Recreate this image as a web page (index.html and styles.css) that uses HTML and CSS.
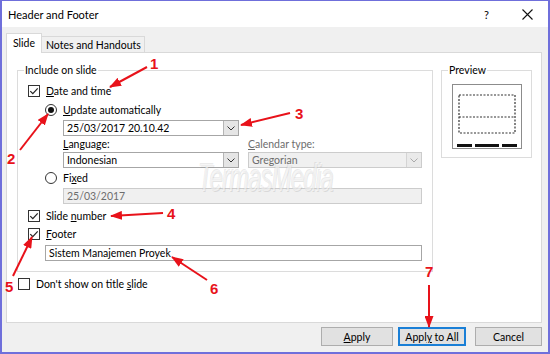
FILE: index.html
```html
<!DOCTYPE html>
<html>
<head>
    <title>Header and Footer</title>
    <link rel="stylesheet" href="styles.css">
</head>
<body>
<div class="dialog">
    <div class="titlebar">
        <span class="title">Header and Footer</span>
        <span class="help">?</span>
        <svg class="close" width="11" height="11" viewBox="0 0 11 11"><path d="M0.5 0.5L10.5 10.5M10.5 0.5L0.5 10.5" stroke="#111" stroke-width="1.1"/></svg>
    </div>

    <div class="content">
        <div class="tabs">
            <div class="tab active">Slide</div>
            <div class="tab">Notes and Handouts</div>
        </div>

        <div class="panel">
            <div class="panel-top">
                <fieldset class="group include">
                    <legend>Include on slide</legend>
                    <div class="rows">
                        <label class="check row-date">
                            <svg width="12" height="12" viewBox="0 0 12 12"><rect x="0.5" y="0.5" width="11" height="11" fill="#fff" stroke="#333"/><path d="M2.3 6.2L4.8 8.7L9.7 3.3" fill="none" stroke="#222" stroke-width="1.2"/></svg>
                            <span><u>D</u>ate and time</span>
                        </label>
                        <label class="check radio row-auto">
                            <svg width="12" height="12" viewBox="0 0 12 12"><circle cx="6" cy="6" r="5.5" fill="#fff" stroke="#333"/><circle cx="6" cy="6" r="3" fill="#111"/></svg>
                            <span><u>U</u>pdate automatically</span>
                        </label>
                        <div class="field select date-select">
                            <span class="value">25/03/2017 20.10.42</span>
                            <span class="drop"><svg width="8" height="5" viewBox="0 0 8 5"><path d="M0.5 0.5L4 4L7.5 0.5" fill="none" stroke="#333"/></svg></span>
                        </div>
                        <div class="field pair labels">
                            <span class="half"><u>L</u>anguage:</span>
                            <span class="half wide muted"><u>C</u>alendar type:</span>
                        </div>
                        <div class="field pair">
                            <div class="select half">
                                <span class="value">Indonesian</span>
                                <span class="drop"><svg width="8" height="5" viewBox="0 0 8 5"><path d="M0.5 0.5L4 4L7.5 0.5" fill="none" stroke="#333"/></svg></span>
                            </div>
                            <div class="select half wide disabled">
                                <span class="value">Gregorian</span>
                                <span class="drop"><svg width="8" height="5" viewBox="0 0 8 5"><path d="M0.5 0.5L4 4L7.5 0.5" fill="none" stroke="#aaa"/></svg></span>
                            </div>
                        </div>
                        <label class="check radio row-fixed">
                            <svg width="12" height="12" viewBox="0 0 12 12"><circle cx="6" cy="6" r="5.5" fill="#fff" stroke="#333"/></svg>
                            <span>Fi<u>x</u>ed</span>
                        </label>
                        <div class="field input fixed-input disabled">25/03/2017</div>
                        <label class="check row-number">
                            <svg width="12" height="12" viewBox="0 0 12 12"><rect x="0.5" y="0.5" width="11" height="11" fill="#fff" stroke="#333"/><path d="M2.3 6.2L4.8 8.7L9.7 3.3" fill="none" stroke="#222" stroke-width="1.2"/></svg>
                            <span>Slide <u>n</u>umber</span>
                        </label>
                        <label class="check row-footer">
                            <svg width="12" height="12" viewBox="0 0 12 12"><rect x="0.5" y="0.5" width="11" height="11" fill="#fff" stroke="#333"/><path d="M2.3 6.2L4.8 8.7L9.7 3.3" fill="none" stroke="#222" stroke-width="1.2"/></svg>
                            <span><u>F</u>ooter</span>
                        </label>
                        <div class="input footer-input">Sistem Manajemen Proyek</div>
                    </div>
                </fieldset>

                <fieldset class="group preview">
                    <legend>Preview</legend>
                    <svg class="preview-box" width="70" height="65" viewBox="0 0 70 65">
                        <rect x="0.5" y="0.5" width="69" height="64" fill="#fff" stroke="#8c8c8c"/>
                        <rect x="7" y="11" width="56" height="38" fill="none" stroke="#333" stroke-width="1.2" stroke-dasharray="2 1.5"/>
                        <line x1="7" y1="33" x2="63" y2="33" stroke="#333" stroke-width="1.2" stroke-dasharray="2 1.5"/>
                        <rect x="5" y="60" width="15" height="3" fill="#111"/>
                        <rect x="23" y="60" width="24" height="3" fill="#111"/>
                        <rect x="50" y="60" width="15" height="3" fill="#111"/>
                    </svg>
                </fieldset>
            </div>

            <label class="check dont-show">
                <svg width="12" height="12" viewBox="0 0 12 12"><rect x="0.5" y="0.5" width="11" height="11" fill="#fff" stroke="#333"/></svg>
                <span>Don't show on title <u>s</u>lide</span>
            </label>
        </div>

        <div class="buttons">
            <button class="btn apply"><u>A</u>pply</button>
            <button class="btn apply-all">Appl<u>y</u> to All</button>
            <button class="btn cancel">Cancel</button>
        </div>
    </div>

    <div class="watermark">TermasMedia</div>

    <!-- red callouts drawn over the dialog -->
    <svg class="callouts" width="550" height="354" viewBox="0 0 550 354">
        <defs>
            <marker id="head" markerWidth="12" markerHeight="9" refX="11" refY="4.5" orient="auto" markerUnits="userSpaceOnUse">
                <path d="M0 0L12 4.5L0 9z" fill="#e8121a"/>
            </marker>
        </defs>
        <g stroke="#e8121a" stroke-width="2" marker-end="url(#head)">
            <line x1="147" y1="67" x2="110" y2="87"/>
            <line x1="20" y1="150" x2="48" y2="114"/>
            <line x1="290" y1="113" x2="241" y2="125"/>
            <line x1="163" y1="213" x2="111" y2="216"/>
            <line x1="13" y1="276" x2="32" y2="237"/>
            <line x1="207" y1="280" x2="172" y2="257"/>
            <line x1="429" y1="285" x2="429" y2="327"/>
        </g>
        <g class="num">
            <text x="150" y="69">1</text>
            <text x="7" y="164">2</text>
            <text x="295" y="119">3</text>
            <text x="167" y="219">4</text>
            <text x="5" y="292">5</text>
            <text x="210" y="294">6</text>
            <text x="425" y="277">7</text>
        </g>
    </svg>
</div>
</body>
</html>
```

FILE: styles.css
```css
* {
    box-sizing: border-box;
}
body {
    margin: 0;
    font-family: Lato, "Liberation Sans", sans-serif;
    font-size: 10.5px;
    color: #000;
}
.dialog {
    position: relative;
    width: 550px;
    height: 354px;
    border: 2px solid #6f6fdb;
    border-top-width: 1px;
    background: #f0f0f0;
    display: flex;
    flex-direction: column;
}
.titlebar {
    height: 26px;
    background: #fff;
    display: flex;
    align-items: center;
    padding-left: 6px;
    font-size: 11px;
}
.title {
    flex: 1;
}
.help {
    margin-right: 33px;
}
.close {
    margin-right: 15px;
}
.content {
    flex: 1;
    padding: 6px 6px 0 4px;
}
.tabs {
    position: relative;
    z-index: 1;
    height: 19px;
    display: flex;
    align-items: flex-end;
}
.tab {
    height: 16px;
    width: 103px;
    padding-left: 4px;
    border: 1px solid #d9d9d9;
    border-left: none;
    border-bottom: none;
    display: flex;
    align-items: center;
    white-space: nowrap;
}
.tab.active {
    height: 20px;
    width: 36px;
    margin-bottom: -1px;
    padding-left: 6px;
    padding-bottom: 1px;
    background: #fff;
    border-left: 1px solid #d9d9d9;
}
.panel {
    height: 271px;
    background: #fff;
    border: 1px solid #d9d9d9;
    padding: 10px 0 0 10px;
}
.panel-top {
    display: flex;
    align-items: flex-start;
}
.group {
    margin: 0;
    min-width: 0;
    border: 1px solid #dcdcdc;
    padding: 5px 0 10px 6px;
}
.group legend {
    padding: 0 1px;
    line-height: 14px;
}
.include {
    width: 416px;
}
.preview {
    width: 91px;
    margin-left: 8px;
    padding-bottom: 8px;
}
.preview-box {
    display: block;
    margin: 2px 0 0 4px;
}
.rows {
    padding-left: 4px;
}
.check {
    display: flex;
    align-items: center;
    gap: 6px;
    height: 18px;
}
.check svg {
    flex: none;
}
.row-date {
    height: 17px;
}
.radio {
    margin-left: 17px;
}
.row-auto {
    margin-top: 2px;
}
.row-fixed {
    height: 20px;
}
.row-number {
    margin-top: 3px;
}
.field {
    margin-left: 35px;
}
.select,
.input {
    height: 16px;
    border: 1px solid #a6a6a6;
    background: #fff;
    display: flex;
    align-items: center;
}
.date-select {
    margin-top: 1px;
    width: 176px;
}
.value {
    flex: 1;
    padding-left: 3px;
}
.drop {
    width: 15px;
    height: 100%;
    background: #e5e5e5;
    border-left: 1px solid #b5b5b5;
    display: flex;
    align-items: center;
    justify-content: center;
}
.pair {
    display: flex;
    height: 16px;
}
.labels {
    align-items: center;
}
.half {
    width: 176px;
}
.half.wide {
    width: 174px;
    margin-left: 9px;
}
.muted {
    color: #6d6d6d;
}
.disabled {
    background: #f0f0f0;
    border-color: #cccccc;
    color: #6d6d6d;
}
.disabled .drop {
    background: #eaeaea;
    border-left-color: #d4d4d4;
}
.input {
    padding-left: 3px;
}
.fixed-input {
    width: 359px;
}
.footer-input {
    width: 377px;
    margin: 2px 0 0 17px;
}
.dont-show {
    margin: 3px 0 0 1px;
    height: 17px;
}
.buttons {
    display: flex;
    justify-content: flex-end;
    margin-top: 4px;
}
.btn {
    height: 19px;
    padding: 0;
    font: inherit;
    color: #000;
    background: #e1e1e1;
    border: 1px solid #adadad;
}
.apply {
    width: 72px;
}
.apply-all {
    width: 68px;
    margin-left: 5px;
    border: 2px solid #1a7fd6;
}
.cancel {
    width: 67px;
    margin-left: 9px;
}
.watermark {
    position: absolute;
    left: 196px;
    top: 156px;
    font-family: "Liberation Sans Narrow", "Liberation Sans", sans-serif;
    font-size: 38px;
    font-style: italic;
    letter-spacing: -1px;
    transform: scaleX(0.62);
    transform-origin: left top;
    color: rgba(255, 255, 255, 0.6);
    text-shadow: 1px 1px 0 rgba(150, 150, 150, 0.25), -1px -1px 0 rgba(150, 150, 150, 0.2);
    pointer-events: none;
}
.callouts {
    position: absolute;
    left: -2px;
    top: -1px;
    pointer-events: none;
}
.num text {
    font-family: "Liberation Sans", sans-serif;
    font-weight: bold;
    font-size: 15px;
    fill: #e8121a;
}
```
